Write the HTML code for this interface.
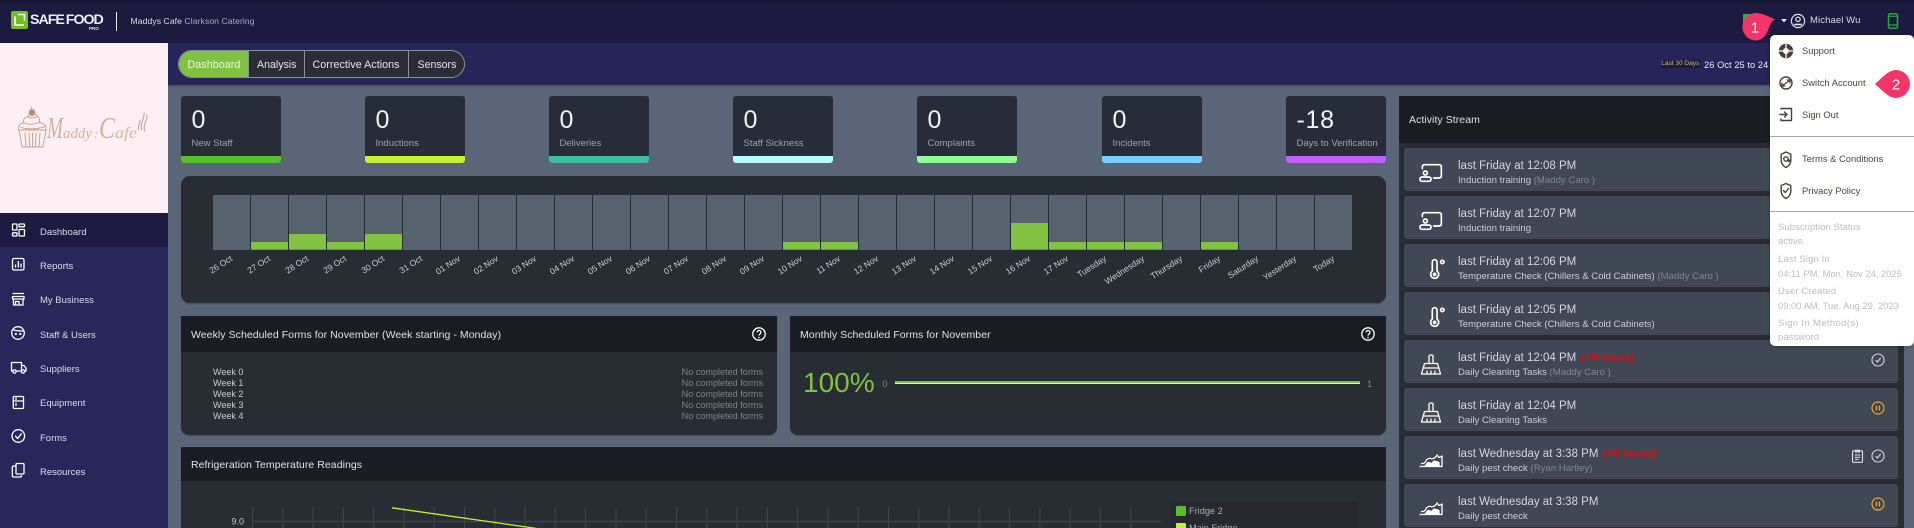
<!DOCTYPE html>
<html lang="en"><head><meta charset="utf-8"><title>Safe Food Pro</title>
<style>
html,body{margin:0;padding:0;width:1914px;height:528px;overflow:hidden;background:#5a6577;font-family:"Liberation Sans",sans-serif;-webkit-font-smoothing:antialiased}
#root{position:absolute;left:0;top:0;width:1914px;height:528px;overflow:hidden;background:#5a6577}
.a{position:absolute}
.t{position:absolute;white-space:nowrap;line-height:14px;height:14px}
svg{position:absolute;overflow:visible}
.nav{left:40px;font-size:9.5px;color:#dcdce6}
.card{position:absolute;top:96px;width:100px;height:67px;background:#282c38;border-radius:3px;overflow:hidden}
.card b{position:absolute;left:0;right:0;bottom:0;height:7px}
.card .n{position:absolute;left:10.500px;top:10px;font-size:25px;line-height:28px;color:#f2f3f5;letter-spacing:.7px}
.card .l{position:absolute;left:10.500px;top:40.500px;font-size:9.5px;line-height:14px;color:#9da1ab;white-space:nowrap}
.panel{position:absolute;background:#282c33}
.head{position:absolute;left:0;right:0;top:0;background:#1a1d22}
.pt{font-size:10.5px;color:#dfe1e4;letter-spacing:.06px}
.wk{left:213px;font-size:9px;color:#c9ccd0}
.nc{right:1151px;font-size:9.1px;color:#7e838a}
.item{position:absolute;left:1404px;width:494px;height:43px;background:#404855;border-radius:3px}
.l1{position:absolute;left:54px;top:11px;font-size:11.5px;line-height:14px;color:#d4d7dc;white-space:nowrap}
.l2{position:absolute;left:54px;top:25.500px;font-size:9.6px;line-height:14px;color:#c9cdd3;white-space:nowrap}
.l2 i{font-style:normal;color:#7d8794}
.l1 u{text-decoration:none;color:#e30613;font-weight:bold;font-size:11px;margin-left:5px}
.m{left:1802px;font-size:9.4px;color:#4a423e}
.g{left:1778px;font-size:9.6px;color:#bdbdbd}
.ic{stroke:#fff;fill:none;stroke-width:5;stroke-linecap:round;stroke-linejoin:round}
.i2{stroke:#fff;fill:none;stroke-width:1.3;stroke-linecap:round;stroke-linejoin:round}
.i3{stroke:#4c3d38;fill:none;stroke-width:1.4;stroke-linecap:round;stroke-linejoin:round}
</style></head><body><div id="root">

<!-- header -->
<div class="a" style="left:0;top:0;width:1914px;height:43px;background:linear-gradient(#181633,#1c1a40 5px)"></div>
<div class="a" style="left:168px;top:43px;width:1746px;height:42px;background:#262458;box-shadow:0 1px 2px rgba(0,0,0,.25)"></div>
<div class="a" style="left:11px;top:11px;width:17px;height:18px;background:#6fc01f;border-radius:2px"></div>
<svg style="left:11px;top:11px" width="17" height="18" viewBox="0 0 17 18"><path d="M4 5.500V14H13M7 3.500H13.500V10" fill="none" stroke="#fff" stroke-width="1.600"/></svg>
<div class="t" style="left:30px;top:13px;font-size:14.2px;font-weight:bold;color:#eef0f2;letter-spacing:-1px;word-spacing:-1px">SAFE FOOD</div>
<div class="t" style="left:89px;top:21.500px;font-size:4.500px;font-weight:bold;color:#e8e8ee">PRO</div>
<div class="a" style="left:116px;top:12px;width:1px;height:19px;background:#e6e6ee"></div>
<div class="t" style="left:130.500px;top:14px;font-size:8.6px;color:#dcdce4;letter-spacing:.08px">Maddys Cafe <span style="color:#a9a9bb">Clarkson Catering</span></div>

<div class="a" style="left:1743px;top:14px;width:8px;height:10px;background:#2dae3c"></div>
<svg style="left:1780px;top:18px" width="8" height="6"><path d="M1 1H7L4 4.500Z" fill="#e8e8ee"/></svg>
<svg style="left:1790px;top:13px" width="16" height="16" viewBox="0 0 16 16"><circle cx="8" cy="8" r="6.600" fill="none" stroke="#dedee6" stroke-width="1.200"/><circle cx="8" cy="6.300" r="2.200" fill="none" stroke="#dedee6" stroke-width="1.200"/><path d="M4 11.500H12" stroke="#dedee6" stroke-width="1.600"/></svg>
<div class="t" style="left:1810px;top:14px;font-size:9.5px;color:#d8d8e2;letter-spacing:.1px">Michael Wu</div>
<svg style="left:1887px;top:13px" width="12" height="16" viewBox="0 0 12 16"><rect x="1.500" y=".8" width="9" height="14.400" rx="1.500" fill="none" stroke="#28a83a" stroke-width="1.500"/><path d="M1.500 3.300H10.500M1.500 12H10.500" stroke="#28a83a" stroke-width="1.200"/></svg>

<!-- tabs -->
<div class="a" style="left:178px;top:50px;width:285px;height:26px;border:1px solid #8c9097;border-radius:14px;background:#2a2d36;overflow:hidden">
<div class="a" style="left:0;top:0;width:69px;height:26px;background:#7fc241"></div>
<div class="a" style="left:69px;top:0;width:1px;height:26px;background:#8c9097"></div>
<div class="a" style="left:125px;top:0;width:1px;height:26px;background:#8c9097"></div>
<div class="a" style="left:229px;top:0;width:1px;height:26px;background:#8c9097"></div>
<div class="t" style="left:8.500px;top:7px;font-size:10.8px;color:#eef5e6">Dashboard</div>
<div class="t" style="left:78px;top:7px;font-size:10.6px;color:#e2e4e8">Analysis</div>
<div class="t" style="left:133.500px;top:7px;font-size:10.8px;color:#e2e4e8">Corrective Actions</div>
<div class="t" style="left:238.500px;top:7px;font-size:10.6px;color:#e2e4e8">Sensors</div>
</div>
<div class="t" style="left:1660.500px;top:60px;width:39.500px;height:8px;line-height:8px;background:#1d1f2d;border-radius:1px;font-size:6.500px;color:#b9baa8;text-align:center">Last 30 Days</div>
<div class="t" style="left:1704px;top:57.500px;font-size:9.2px;color:#eceef2;letter-spacing:.1px">26 Oct 25 to 24</div>

<!-- sidebar -->
<div class="a" style="left:0;top:43px;width:168px;height:485px;background:#28265a"></div>
<div class="a" style="left:0;top:43px;width:168px;height:170px;background:#feeff4"></div>
<div class="a" style="left:0;top:213px;width:168px;height:34px;background:#1e1b43"></div>

<!-- cupcake logo -->
<svg style="left:18px;top:107px" width="132" height="44" viewBox="0 0 132 44">
<g fill="none" stroke="#c29d88" stroke-width=".9" stroke-linecap="round">
<path d="M1 23H28L25 40H4Z"/><path d="M7 26L8 39.500M11 26L11.500 39.500M14.500 26V39.500M18 26L17.500 39.500M22 26L21 39.500"/>
<path d="M1 23C-1 20 2 16 6 16C4 12 8 10 10 9.500C11 6 18 6 19 9C22 11 22 14 21 15.500C26 16 29 19 28 23"/>
<path d="M6 16C11 18 17 17.500 21 15.500M10 10C13 11.500 16 11.500 19 9.500M3 20.500C11 23 21 22 27 19.500"/>
<circle cx="14" cy="5.500" r="3" fill="#b98b75"/><path d="M14 2.500L13 0"/>
<path d="M124 23C121 17 127 12 126 6M127 24C124 18 130 13 129 8M121 23C119 20 122 17 122 13" stroke-width="1"/>
</g>
<g font-family="Liberation Serif,serif" font-style="italic" fill="#c9a693" opacity=".85">
<text x="29" y="31" font-size="31" textLength="16" lengthAdjust="spacingAndGlyphs">M</text>
<text x="45" y="31" font-size="15" textLength="29" lengthAdjust="spacingAndGlyphs">addy</text>
<text x="76" y="31" font-size="13">:</text>
<text x="81" y="31" font-size="31" textLength="16" lengthAdjust="spacingAndGlyphs">C</text>
<text x="97" y="31" font-size="16" textLength="22" lengthAdjust="spacingAndGlyphs">afe</text>
</g>
</svg>

<div class="t nav" style="top:226px">Dashboard</div>
<div class="t nav" style="top:260px">Reports</div>
<div class="t nav" style="top:294px">My Business</div>
<div class="t nav" style="top:329px">Staff &amp; Users</div>
<div class="t nav" style="top:363px">Suppliers</div>
<div class="t nav" style="top:397px">Equipment</div>
<div class="t nav" style="top:432px">Forms</div>
<div class="t nav" style="top:466px">Resources</div>

<svg style="left:0;top:0" width="168" height="528" viewBox="0 0 168 528">
<g class="i2">
<rect x="12.500" y="224" width="4.500" height="6" rx=".6"/><rect x="19" y="224" width="5.500" height="2.800" rx=".6"/><rect x="12.500" y="232.800" width="4.500" height="3.200" rx=".6"/><rect x="19" y="229.500" width="5.500" height="6.500" rx=".6"/>
<rect x="12.500" y="258.500" width="11.500" height="11.500" rx="1.500"/><path d="M15.500 267V265M18.300 267V261.500M21 267V264"/>
<path d="M13 293.500H23.500M12.500 296.500H24V299H12.500ZM13.500 299V305H23V299M15.500 305V301.500H19V305"/>
<circle cx="18" cy="333" r="6.300"/><path d="M13 329.500C15 331 20 331 23 331"/><circle cx="15.800" cy="334" r=".5"/><circle cx="20.300" cy="334" r=".5"/>
<path d="M13 371H11.500V362.500H21.500V371H16.500M21.500 365.500H24L26 368V371H24.500"/><circle cx="14.500" cy="371.500" r="1.600"/><circle cx="23" cy="371.500" r="1.600"/>
<rect x="13.300" y="396.500" width="10.200" height="12" rx="1"/><path d="M13.300 401H23.500M16 398V399.500M16 403.500V405.500"/>
<circle cx="18.300" cy="436" r="6.300"/><path d="M15.500 436.200L17.700 438.500L21.300 433.800"/>
<rect x="16" y="463.500" width="8" height="10.500" rx="1"/><path d="M16 466H13.800C12.800 466 12.300 466.600 12.300 467.500V475.500C12.300 476.400 12.800 477 13.800 477H20C21 477 21.500 476.500 21.500 475.800"/>
</g></svg>

<!-- stat cards -->
<div class="card" style="left:181px"><div class="n">0</div><div class="l">New Staff</div><b style="background:#52c026"></b></div>
<div class="card" style="left:365px"><div class="n">0</div><div class="l">Inductions</div><b style="background:#c5f135"></b></div>
<div class="card" style="left:549px"><div class="n">0</div><div class="l">Deliveries</div><b style="background:#3bbf9f"></b></div>
<div class="card" style="left:733px"><div class="n">0</div><div class="l">Staff Sickness</div><b style="background:#b5ffff"></b></div>
<div class="card" style="left:917px"><div class="n">0</div><div class="l">Complaints</div><b style="background:#8eff95"></b></div>
<div class="card" style="left:1102px"><div class="n">0</div><div class="l">Incidents</div><b style="background:#76cfff"></b></div>
<div class="card" style="left:1286px"><div class="n">-18</div><div class="l">Days to Verification</div><b style="background:#c05fff"></b></div>

<!-- bar chart -->
<div class="panel" style="left:181px;top:176px;width:1205px;height:127px;border-radius:9px;box-shadow:0 1px 1px #454c5a"></div>
<svg style="left:0;top:0" width="1914" height="528" viewBox="0 0 1914 528">
<g fill="#56626e">
<rect x="213" y="195" width="37" height="55"/><rect x="251" y="195" width="37" height="55"/><rect x="289" y="195" width="37" height="55"/><rect x="327" y="195" width="37" height="55"/><rect x="365" y="195" width="37" height="55"/><rect x="403" y="195" width="37" height="55"/><rect x="441" y="195" width="37" height="55"/><rect x="479" y="195" width="37" height="55"/><rect x="517" y="195" width="37" height="55"/><rect x="555" y="195" width="37" height="55"/><rect x="593" y="195" width="37" height="55"/><rect x="631" y="195" width="37" height="55"/><rect x="669" y="195" width="37" height="55"/><rect x="707" y="195" width="37" height="55"/><rect x="745" y="195" width="37" height="55"/><rect x="783" y="195" width="37" height="55"/><rect x="821" y="195" width="37" height="55"/><rect x="859" y="195" width="37" height="55"/><rect x="897" y="195" width="37" height="55"/><rect x="935" y="195" width="37" height="55"/><rect x="973" y="195" width="37" height="55"/><rect x="1011" y="195" width="37" height="55"/><rect x="1049" y="195" width="37" height="55"/><rect x="1087" y="195" width="37" height="55"/><rect x="1125" y="195" width="37" height="55"/><rect x="1163" y="195" width="37" height="55"/><rect x="1201" y="195" width="37" height="55"/><rect x="1239" y="195" width="37" height="55"/><rect x="1277" y="195" width="37" height="55"/><rect x="1315" y="195" width="37" height="55"/>
</g>
<g fill="#80c241">
<rect x="251" y="242" width="37" height="7.500"/><rect x="289" y="234" width="37" height="15.500"/><rect x="327" y="242" width="37" height="7.500"/><rect x="365" y="234" width="37" height="15.500"/><rect x="783" y="242" width="37" height="7.500"/><rect x="821" y="242" width="37" height="7.500"/><rect x="1011" y="223" width="37" height="26.500"/><rect x="1049" y="242" width="37" height="7.500"/><rect x="1087" y="242" width="37" height="7.500"/><rect x="1125" y="242" width="37" height="7.500"/><rect x="1201" y="242" width="37" height="7.500"/>
</g>
<g font-family="Liberation Sans,sans-serif" font-size="8.600" fill="#c8ccd0" text-anchor="end">
<text transform="translate(233 260) rotate(-33)">26 Oct</text><text transform="translate(271 260) rotate(-33)">27 Oct</text><text transform="translate(309 260) rotate(-33)">28 Oct</text><text transform="translate(347 260) rotate(-33)">29 Oct</text><text transform="translate(385 260) rotate(-33)">30 Oct</text><text transform="translate(423 260) rotate(-33)">31 Oct</text><text transform="translate(461 260) rotate(-33)">01 Nov</text><text transform="translate(499 260) rotate(-33)">02 Nov</text><text transform="translate(537 260) rotate(-33)">03 Nov</text><text transform="translate(575 260) rotate(-33)">04 Nov</text><text transform="translate(613 260) rotate(-33)">05 Nov</text><text transform="translate(651 260) rotate(-33)">06 Nov</text><text transform="translate(689 260) rotate(-33)">07 Nov</text><text transform="translate(727 260) rotate(-33)">08 Nov</text><text transform="translate(765 260) rotate(-33)">09 Nov</text><text transform="translate(803 260) rotate(-33)">10 Nov</text><text transform="translate(841 260) rotate(-33)">11 Nov</text><text transform="translate(879 260) rotate(-33)">12 Nov</text><text transform="translate(917 260) rotate(-33)">13 Nov</text><text transform="translate(955 260) rotate(-33)">14 Nov</text><text transform="translate(993 260) rotate(-33)">15 Nov</text><text transform="translate(1031 260) rotate(-33)">16 Nov</text><text transform="translate(1069 260) rotate(-33)">17 Nov</text><text transform="translate(1107 260) rotate(-33)">Tuesday</text><text transform="translate(1145 260) rotate(-33)">Wednesday</text><text transform="translate(1183 260) rotate(-33)">Thursday</text><text transform="translate(1221 260) rotate(-33)">Friday</text><text transform="translate(1259 260) rotate(-33)">Saturday</text><text transform="translate(1297 260) rotate(-33)">Yesterday</text><text transform="translate(1335 260) rotate(-33)">Today</text>
</g>
</svg>

<!-- weekly -->
<div class="panel" style="left:181px;top:316px;width:596px;height:119px;border-radius:0 0 8px 8px;box-shadow:0 1px 1px #454c5a"><div class="head" style="height:36px"></div></div>
<div class="t pt" style="left:191px;top:328px">Weekly Scheduled Forms for November (Week starting - Monday)</div>
<svg style="left:752px;top:327px" width="14" height="14" viewBox="0 0 14 14"><circle cx="7" cy="7" r="6.200" fill="none" stroke="#fff" stroke-width="1.300"/><path d="M5 5.400C5 2.900 9 2.900 9 5.400C9 7 7 7 7 8.600" fill="none" stroke="#fff" stroke-width="1.200"/><circle cx="7" cy="10.500" r=".8" fill="#fff"/></svg>
<div class="t wk" style="top:364.500px">Week 0</div><div class="t wk" style="top:375.500px">Week 1</div><div class="t wk" style="top:386.500px">Week 2</div><div class="t wk" style="top:397.500px">Week 3</div><div class="t wk" style="top:408.500px">Week 4</div>
<div class="t nc" style="top:364.500px">No completed forms</div><div class="t nc" style="top:375.500px">No completed forms</div><div class="t nc" style="top:386.500px">No completed forms</div><div class="t nc" style="top:397.500px">No completed forms</div><div class="t nc" style="top:408.500px">No completed forms</div>

<!-- monthly -->
<div class="panel" style="left:790px;top:316px;width:596px;height:119px;border-radius:0 0 8px 8px;box-shadow:0 1px 1px #454c5a"><div class="head" style="height:36px"></div></div>
<div class="t pt" style="left:800px;top:328px">Monthly Scheduled Forms for November</div>
<svg style="left:1361px;top:327px" width="14" height="14" viewBox="0 0 14 14"><circle cx="7" cy="7" r="6.200" fill="none" stroke="#fff" stroke-width="1.300"/><path d="M5 5.400C5 2.900 9 2.900 9 5.400C9 7 7 7 7 8.600" fill="none" stroke="#fff" stroke-width="1.200"/><circle cx="7" cy="10.500" r=".8" fill="#fff"/></svg>
<div class="a" style="left:803px;top:367px;font-size:28px;line-height:32px;color:#7fc241;white-space:nowrap">100%</div>
<div class="t" style="left:882.500px;top:376.500px;font-size:9px;color:#7e838a">0</div>
<div class="a" style="left:895px;top:381px;width:465px;height:2px;background:#7fc241;border-bottom:1px solid #f1f5e8"></div>
<div class="t" style="left:1367px;top:376.500px;font-size:9px;color:#7e838a">1</div>

<!-- refrigeration -->
<div class="panel" style="left:181px;top:447px;width:1205px;height:81px"><div class="head" style="height:34px"></div></div>
<div class="t pt" style="left:191px;top:458px">Refrigeration Temperature Readings</div>
<svg style="left:0;top:0" width="1914" height="528" viewBox="0 0 1914 528">
<path d="M252.500 507V528M282.800 507V528M313 507V528M343.300 507V528M373.600 507V528M403.900 507V528M434.200 507V528M464.500 507V528M494.800 507V528M525 507V528M555.300 507V528M585.600 507V528M616 507V528M646.200 507V528M676.500 507V528M706.800 507V528M737 507V528M767.300 507V528M797.600 507V528M827.900 507V528M858.200 507V528M888.500 507V528M918.700 507V528M949 507V528M979.300 507V528M1009.600 507V528M1039.900 507V528M1070.200 507V528M1100.400 507V528M1130.700 507V528" stroke="#42464f" stroke-width="1"/>
<path d="M252 521.500H1161" stroke="#3d4149" stroke-width="1.400"/>
<path d="M392 507.800L537 528.500" stroke="#c5f135" stroke-width="1.300" fill="none"/>
<text x="231.500" y="524.500" font-family="Liberation Sans,sans-serif" font-size="9" fill="#c5c8cd">9.0</text>
</svg>
<div class="a" style="left:1171px;top:501px;width:187px;height:27px;background:#262a30"></div>
<div class="a" style="left:1176px;top:506px;width:10px;height:10px;background:#52c026;border-radius:1px"></div>
<div class="t" style="left:1189px;top:504px;font-size:9.2px;color:#a9adb3">Fridge 2</div>
<div class="a" style="left:1176px;top:523px;width:10px;height:5px;background:#c5f135;border-radius:1px 1px 0 0"></div>
<div class="t" style="left:1189px;top:521px;font-size:9.2px;color:#a9adb3">Main Fridge</div>

<!-- activity stream -->
<div class="panel" style="left:1399px;top:96px;width:505px;height:432px"><div class="head" style="height:47px"></div></div>
<div class="t pt" style="left:1409px;top:113px">Activity Stream</div>

<div class="item" style="top:148px"><svg style="left:14px;top:15px" width="25" height="20" viewBox="55 68 75 60"><g class="ic"><path d="M68 85V80Q68 73 75 73H118Q125 73 125 80V106Q125 113 118 113H102"/><circle cx="77" cy="98" r="6"/><rect x="61" y="110" width="33" height="13" rx="6"/></g></svg><div class="l1">last Friday at 12:08 PM</div><div class="l2">Induction training <i>(Maddy Caro )</i></div></div>
<div class="item" style="top:196px"><svg style="left:14px;top:15px" width="25" height="20" viewBox="55 68 75 60"><g class="ic"><path d="M68 85V80Q68 73 75 73H118Q125 73 125 80V106Q125 113 118 113H102"/><circle cx="77" cy="98" r="6"/><rect x="61" y="110" width="33" height="13" rx="6"/></g></svg><div class="l1">last Friday at 12:07 PM</div><div class="l2">Induction training</div></div>
<div class="item" style="top:244px"><svg style="left:25px;top:15px" width="16" height="20" viewBox="75 357 48 60"><g class="ic"><path d="M85 393V366A7 7 0 0 1 99 366V393A12 12 0 1 1 85 393Z"/><circle cx="92" cy="403" r="3"/><circle cx="115" cy="366" r="5"/></g></svg><div class="l1">last Friday at 12:06 PM</div><div class="l2">Temperature Check (Chillers &amp; Cold Cabinets) <i>(Maddy Caro )</i></div></div>
<div class="item" style="top:292px"><svg style="left:25px;top:15px" width="16" height="20" viewBox="75 357 48 60"><g class="ic"><path d="M85 393V366A7 7 0 0 1 99 366V393A12 12 0 1 1 85 393Z"/><circle cx="92" cy="403" r="3"/><circle cx="115" cy="366" r="5"/></g></svg><div class="l1">last Friday at 12:05 PM</div><div class="l2">Temperature Check (Chillers &amp; Cold Cabinets)</div></div>
<div class="item" style="top:340px"><svg style="left:17px;top:14px" width="20" height="21" viewBox="0 0 20 21"><g class="i2"><path d="M8 9V2.200C8 .6 12 .6 12 2.200V9"/><path d="M3.500 9.500H16.500L19.500 20H.5Z"/><path d="M2 14H18M6 20V17M10 20V17M14 20V17"/></g></svg><div class="l1">last Friday at 12:04 PM<u>(+5 hours)</u></div><div class="l2">Daily Cleaning Tasks <i>(Maddy Caro )</i></div><svg style="left:467px;top:13px" width="14" height="14" viewBox="0 0 14 14"><circle cx="7" cy="7" r="6" fill="none" stroke="#d6d9dd" stroke-width="1.100"/><path d="M4.500 7.200L6.300 9L9.600 5" fill="none" stroke="#d6d9dd" stroke-width="1.100"/></svg></div>
<div class="item" style="top:388px"><svg style="left:17px;top:14px" width="20" height="21" viewBox="0 0 20 21"><g class="i2"><path d="M8 9V2.200C8 .6 12 .6 12 2.200V9"/><path d="M3.500 9.500H16.500L19.500 20H.5Z"/><path d="M2 14H18M6 20V17M10 20V17M14 20V17"/></g></svg><div class="l1">last Friday at 12:04 PM</div><div class="l2">Daily Cleaning Tasks</div><svg style="left:467px;top:13px" width="14" height="14" viewBox="0 0 14 14"><circle cx="7" cy="7" r="6" fill="none" stroke="#f5a623" stroke-width="1.200"/><path d="M5.500 4.800V9.200M8.500 4.800V9.200" fill="none" stroke="#f5a623" stroke-width="1.300"/></svg></div>
<div class="item" style="top:436px"><svg style="left:15px;top:17px" width="24" height="15" viewBox="0 0 24 15"><g class="i2"><path d="M1 13.500H23V3L20 4.500L18 2"/><path d="M17.500 3C16 5 14 6 12 5.500C9 5 7 6.500 6.500 9L4.500 10.500H2.500"/><path d="M6 13L9 9.500L13 10.500L15 8L20 9.500V13" fill="#fff"/></g></svg><div class="l1">last Wednesday at 3:38 PM<u>(+5 hours)</u></div><div class="l2">Daily pest check <i>(Ryan Hartley)</i></div><svg style="left:447px;top:13px" width="13" height="14" viewBox="0 0 13 14"><rect x="1.500" y="1.800" width="10" height="11.500" rx="1" fill="none" stroke="#e0e2e6" stroke-width="1.100"/><path d="M4.500 1.200H8.500V3H4.500ZM3.800 6H9.200M3.800 8.200H9.200M3.800 10.400H7.500" fill="none" stroke="#e0e2e6" stroke-width="1"/></svg><svg style="left:467px;top:13px" width="14" height="14" viewBox="0 0 14 14"><circle cx="7" cy="7" r="6" fill="none" stroke="#d6d9dd" stroke-width="1.100"/><path d="M4.500 7.200L6.300 9L9.600 5" fill="none" stroke="#d6d9dd" stroke-width="1.100"/></svg></div>
<div class="item" style="top:484px"><svg style="left:15px;top:17px" width="24" height="15" viewBox="0 0 24 15"><g class="i2"><path d="M1 13.500H23V3L20 4.500L18 2"/><path d="M17.500 3C16 5 14 6 12 5.500C9 5 7 6.500 6.500 9L4.500 10.500H2.500"/><path d="M6 13L9 9.500L13 10.500L15 8L20 9.500V13" fill="#fff"/></g></svg><div class="l1">last Wednesday at 3:38 PM</div><div class="l2">Daily pest check</div><svg style="left:467px;top:13px" width="14" height="14" viewBox="0 0 14 14"><circle cx="7" cy="7" r="6" fill="none" stroke="#f5a623" stroke-width="1.200"/><path d="M5.500 4.800V9.200M8.500 4.800V9.200" fill="none" stroke="#f5a623" stroke-width="1.300"/></svg></div>

<!-- dropdown -->
<div class="a" style="left:1770px;top:35px;width:144px;height:311px;background:#fff;border-radius:5px;box-shadow:0 1px 3px rgba(0,0,0,.25)"></div>
<div class="a" style="left:1770px;top:135.500px;width:144px;height:1px;background:#a9a9a9"></div>
<div class="a" style="left:1770px;top:210.500px;width:144px;height:1px;background:#a9a9a9"></div>
<div class="t m" style="top:44px">Support</div>
<div class="t m" style="top:76px">Switch Account</div>
<div class="t m" style="top:108px">Sign Out</div>
<div class="t m" style="top:152px">Terms &amp; Conditions</div>
<div class="t m" style="top:184px">Privacy Policy</div>
<div class="t g" style="top:220.500px">Subscription Status</div>
<div class="t g" style="top:234.500px">active</div>
<div class="t g" style="top:252.500px;letter-spacing:.1px">Last Sign In</div>
<div class="t g" style="top:266.500px;font-size:9.4px">04:11 PM, Mon, Nov 24, 2025</div>
<div class="t g" style="top:284.500px;letter-spacing:.1px">User Created</div>
<div class="t g" style="top:298.500px;font-size:9.4px">09:00 AM, Tue, Aug 29, 2023</div>
<div class="t g" style="top:316.500px;letter-spacing:.3px">Sign In Method(s)</div>
<div class="t g" style="top:330.500px">password</div>
<svg style="left:1770px;top:35px" width="40" height="170" viewBox="0 0 40 170">
<g class="i3">
<circle cx="16" cy="16" r="6.500" fill="#4c3d38"/><circle cx="16" cy="16" r="3" fill="#fff" stroke="none"/><path d="M16 9.500V12.500M16 19.500V22.500M9.500 16H12.500M19.500 16H22.500" stroke="#fff" stroke-width="1.300"/>
<circle cx="16" cy="48" r="6"/><path d="M12.500 50.500L19.500 45.500M17.200 45H20V47.800M14.800 51H12V48.200" stroke-width="1.300"/>
<path d="M11 74V73.500H21.500V85.500H11V84M10 79.500H17M14.500 77L17 79.500L14.500 82"/>
<path d="M16 117L11.200 119.200V125.500C11.200 129 14 131.500 16 132.500C18 131.500 20.800 129 20.800 125.500V119.200Z"/><circle cx="16" cy="124" r="2.200"/><path d="M18.200 124V125.800C18.200 126.600 19.800 126.600 19.800 125"/>
<path d="M16 148.500L11.200 150.500V156C11.200 160 14 162.500 16 163.500C18 162.500 20.800 160 20.800 156V150.500Z"/><path d="M13.500 155.500L15.400 157.500L18.500 153.500"/>
</g></svg>

<!-- badges -->
<svg style="left:1735px;top:8px" width="180" height="95" viewBox="1735 8 180 95">
<path d="M1755 13C1762 13 1767 16 1775 19.200C1770 22 1769 28 1767 33C1764 38 1760 40.500 1755 40.500A13.800 13.800 0 0 1 1755 13Z" fill="#f5356a"/>
<path d="M1896 70A14 14 0 0 1 1896 98C1889 98 1884 92 1875 84C1884 76 1889 70 1896 70Z" fill="#f5356a"/>
<text x="1755" y="32.500" text-anchor="middle" font-family="Liberation Sans,sans-serif" font-size="15" fill="#fff" font-weight="500">1</text>
<text x="1896" y="89.500" text-anchor="middle" font-family="Liberation Sans,sans-serif" font-size="15" fill="#fff" font-weight="500">2</text>
</svg>
</div></body></html>
